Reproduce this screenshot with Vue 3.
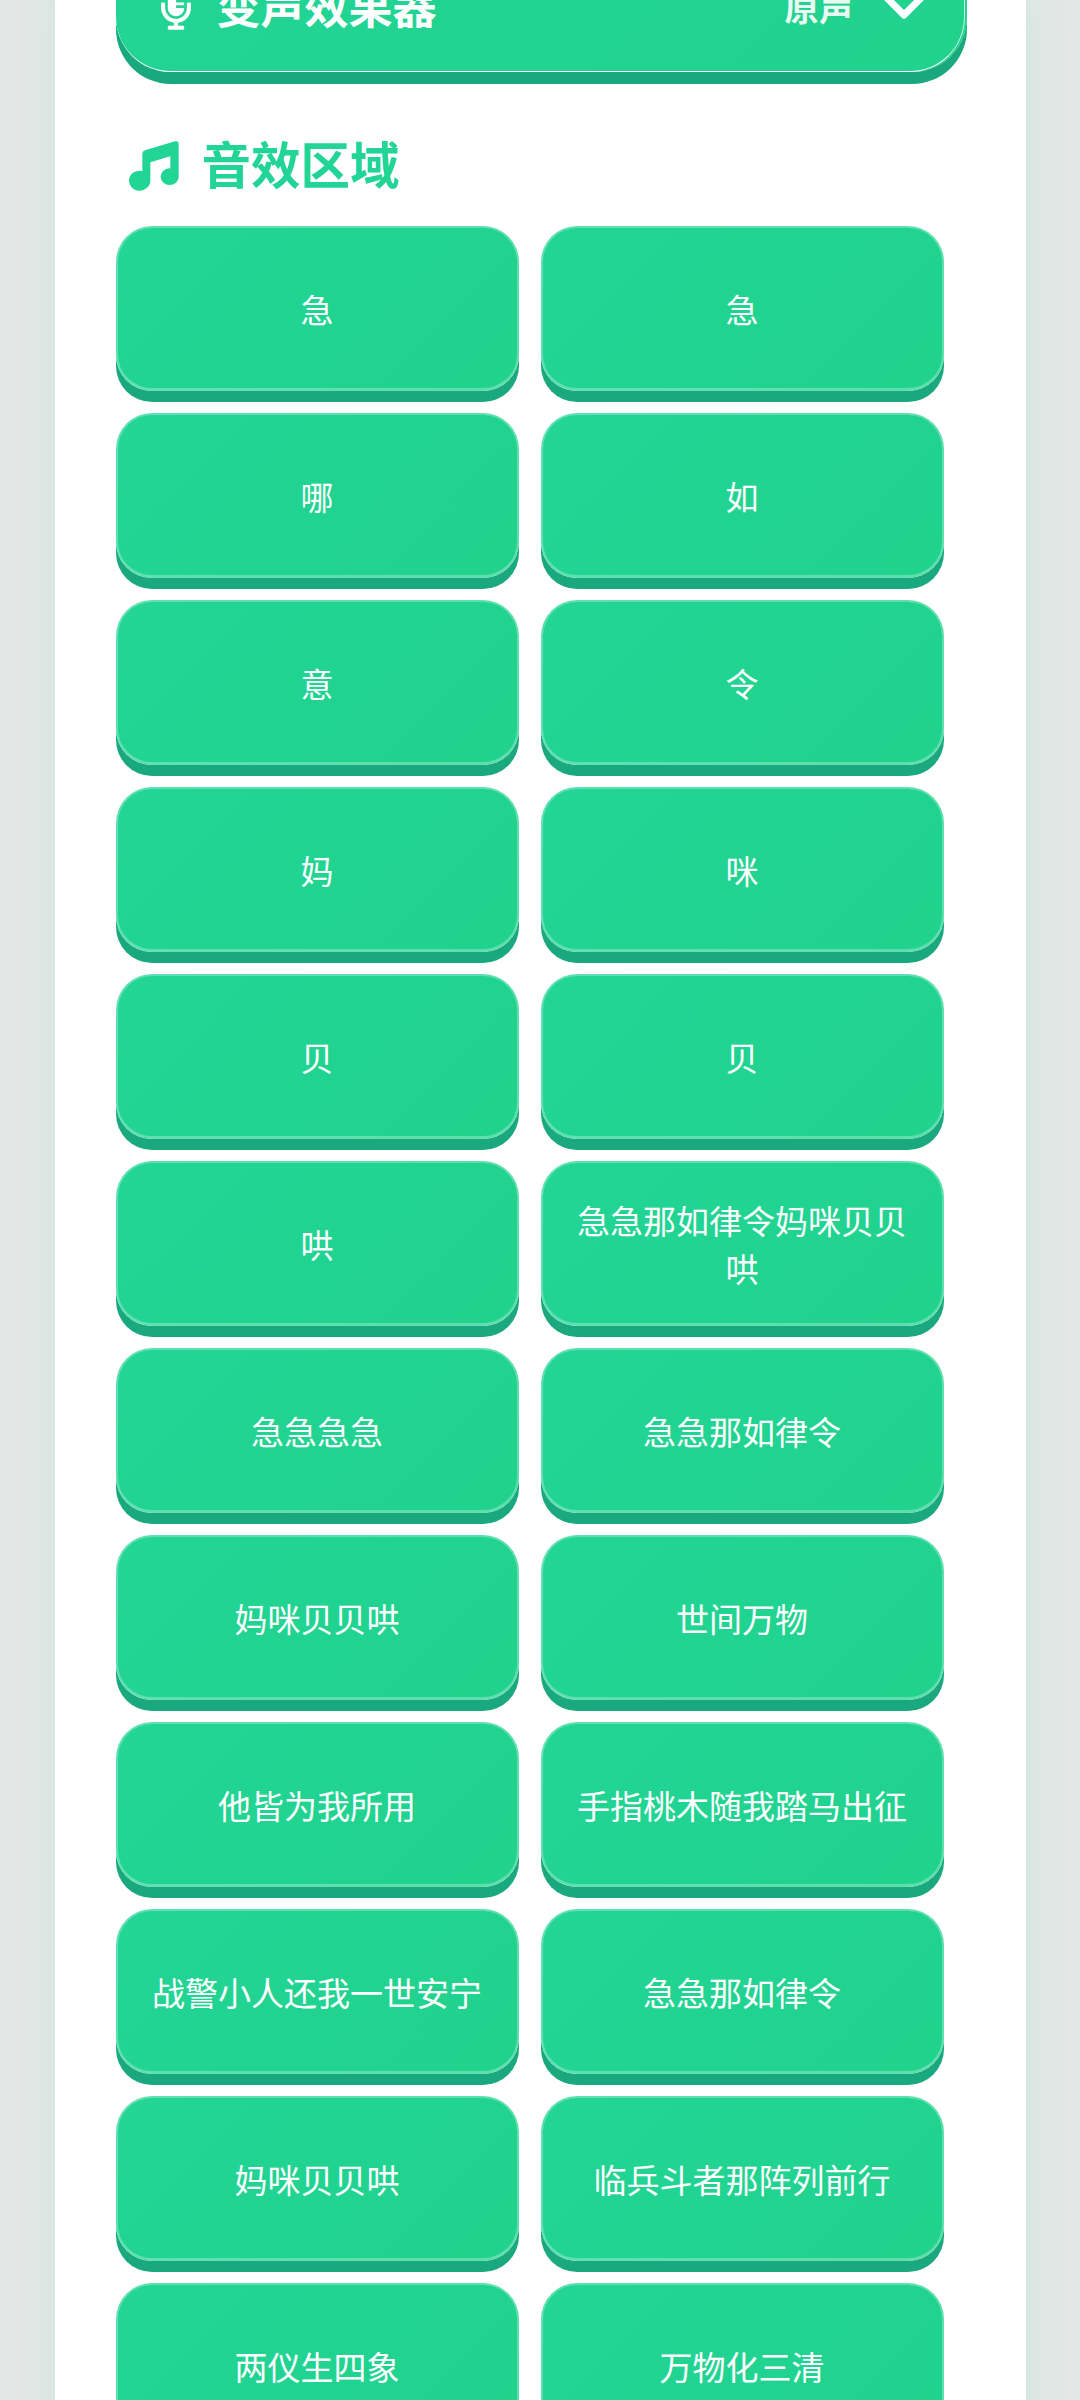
<template>
  <div class="screen">
    <div class="card">
      <!-- 变声器 -->
      <div class="voice-bar">
        <div class="voice-left">
          <svg class="mic-icon" viewBox="0 0 352 512" fill="#fff">
            <path d="M336 192h-16c-8.84 0-16 7.16-16 16v48c0 74.8-64.49 134.82-140.79 127.38C96.71 376.89 48 317.11 48 250.3V208c0-8.84-7.16-16-16-16H16c-8.84 0-16 7.16-16 16v40.16c0 89.64 63.97 169.55 152 181.69V464H96c-8.84 0-16 7.16-16 16v16c0 8.84 7.16 16 16 16h160c8.84 0 16-7.16 16-16v-16c0-8.84-7.16-16-16-16h-56v-33.77C285.71 418.47 352 344.9 352 256v-48c0-8.84-7.16-16-16-16zM176 352c53.02 0 96-42.98 96-96h-85.33c-5.89 0-10.67-3.58-10.67-8v-16c0-4.42 4.78-8 10.67-8H272v-32h-85.33c-5.89 0-10.67-3.58-10.67-8v-16c0-4.42 4.78-8 10.67-8H272v-32h-85.33c-5.89 0-10.67-3.58-10.67-8v-16c0-4.42 4.78-8 10.67-8H272c0-53.02-42.98-96-96-96S80 42.98 80 96v160c0 53.02 42.98 96 96 96z" />
          </svg>
          <span class="voice-title">变声效果器</span>
        </div>
        <div class="voice-right">
          <span class="voice-current">原声</span>
          <svg class="chevron" viewBox="0 0 44 28" fill="none" stroke="#fff" stroke-width="7" stroke-linecap="round" stroke-linejoin="round">
            <polyline points="4,4 22,22 40,4" />
          </svg>
        </div>
      </div>

      <!-- 音效区域 -->
      <h2 class="section-title">
        <svg class="music-icon" viewBox="26 32 150 150" fill="#22d596">
          <path d="M66 70 Q66 62 74 60 L164 33 Q175 30 175 42 L175 138 A27 25 0 1 1 150 114 L150 78 L90 96 L90 150 A32 30 0 1 1 66 122 Z" />
        </svg>
        <span>音效区域</span>
      </h2>

      <div class="sound-grid">
        <button v-for="(item, i) in sounds" :key="i" class="sound-btn">{{ item }}</button>
      </div>
    </div>
  </div>
</template>

<script setup>
const sounds = [
  "急", "急",
  "哪", "如",
  "意", "令",
  "妈", "咪",
  "贝", "贝",
  "哄", "急急那如律令妈咪贝贝哄",
  "急急急急", "急急那如律令",
  "妈咪贝贝哄", "世间万物",
  "他皆为我所用", "手指桃木随我踏马出征",
  "战警小人还我一世安宁", "急急那如律令",
  "妈咪贝贝哄", "临兵斗者那阵列前行",
  "两仪生四象", "万物化三清",
];
</script>

<style>
html,
body {
  margin: 0;
  background: #e8e8e8;
  overflow: hidden;
}
</style>

<style scoped>
.screen {
  height: 2400px;
  overflow: hidden;
  font-family: "Noto Sans CJK SC", "Noto Sans", sans-serif;
}

.card {
  width: 971px;
  margin: 0 auto;
  padding: 1px 59px 0 61px;
  margin-top: -59px;
  box-sizing: border-box;
  min-height: 2600px;
  background: #fff;
  box-shadow: 0 0 80px rgba(30, 220, 140, 0.13);
}

.voice-bar {
  position: relative;
  height: 130px;
  padding: 0 41px 0 45px;
  display: flex;
  align-items: center;
  justify-content: space-between;
  border-radius: 55px;
  background: linear-gradient(135deg, #23d596, #20d28c);
  box-shadow: 0 12px 0 #1aa97e;
  color: #fff;
}

/* 底部和右侧的白色细线 */
.voice-bar::after {
  content: "";
  position: absolute;
  inset: 0 2px 0 0;
  border-radius: 55px;
  border-right: 1.5px solid rgba(255, 255, 255, 0.75);
  border-bottom: 1.5px solid #fff;
  pointer-events: none;
}

.voice-left,
.voice-right {
  display: flex;
  align-items: center;
}

.mic-icon {
  width: 30px;
  height: 44px;
  margin-right: 26px;
  margin-top: 2px;
}

.voice-title {
  font-size: 44px;
  font-weight: 700;
  line-height: 60px;
  margin-bottom: 4px;
}

.voice-current {
  font-size: 34.5px;
  font-weight: 700;
  line-height: 50px;
  opacity: 0.9;
  margin-right: 28px;
  margin-bottom: 3px;
}

.chevron {
  width: 44px;
  height: 28px;
}

.section-title {
  display: flex;
  align-items: center;
  gap: 23px;
  height: 60px;
  margin: 61px 0 0;
  padding-left: 13px;
  font-size: 49.5px;
  font-weight: 700;
  line-height: 60px;
  color: #22d596;
}

.music-icon {
  width: 50px;
  height: 50px;
  margin-top: 5px;
}

.sound-grid {
  display: grid;
  grid-template-columns: 403px 403px;
  column-gap: 22px;
  row-gap: 22px;
  margin-top: 33px;
}

.sound-btn {
  height: 165px;
  padding: 2px 30px 0;
  box-sizing: border-box;
  border: 2px solid rgba(255, 255, 255, 0.28);
  border-bottom-width: 3px;
  border-radius: 36px;
  background: linear-gradient(135deg, #23d596, #20d28c);
  background-origin: border-box;
  box-shadow: 0 11px 0 #1aa97e;
  color: #fff;
  font-family: inherit;
  font-size: 33px;
  line-height: 48px;
  text-align: center;
}
</style>
